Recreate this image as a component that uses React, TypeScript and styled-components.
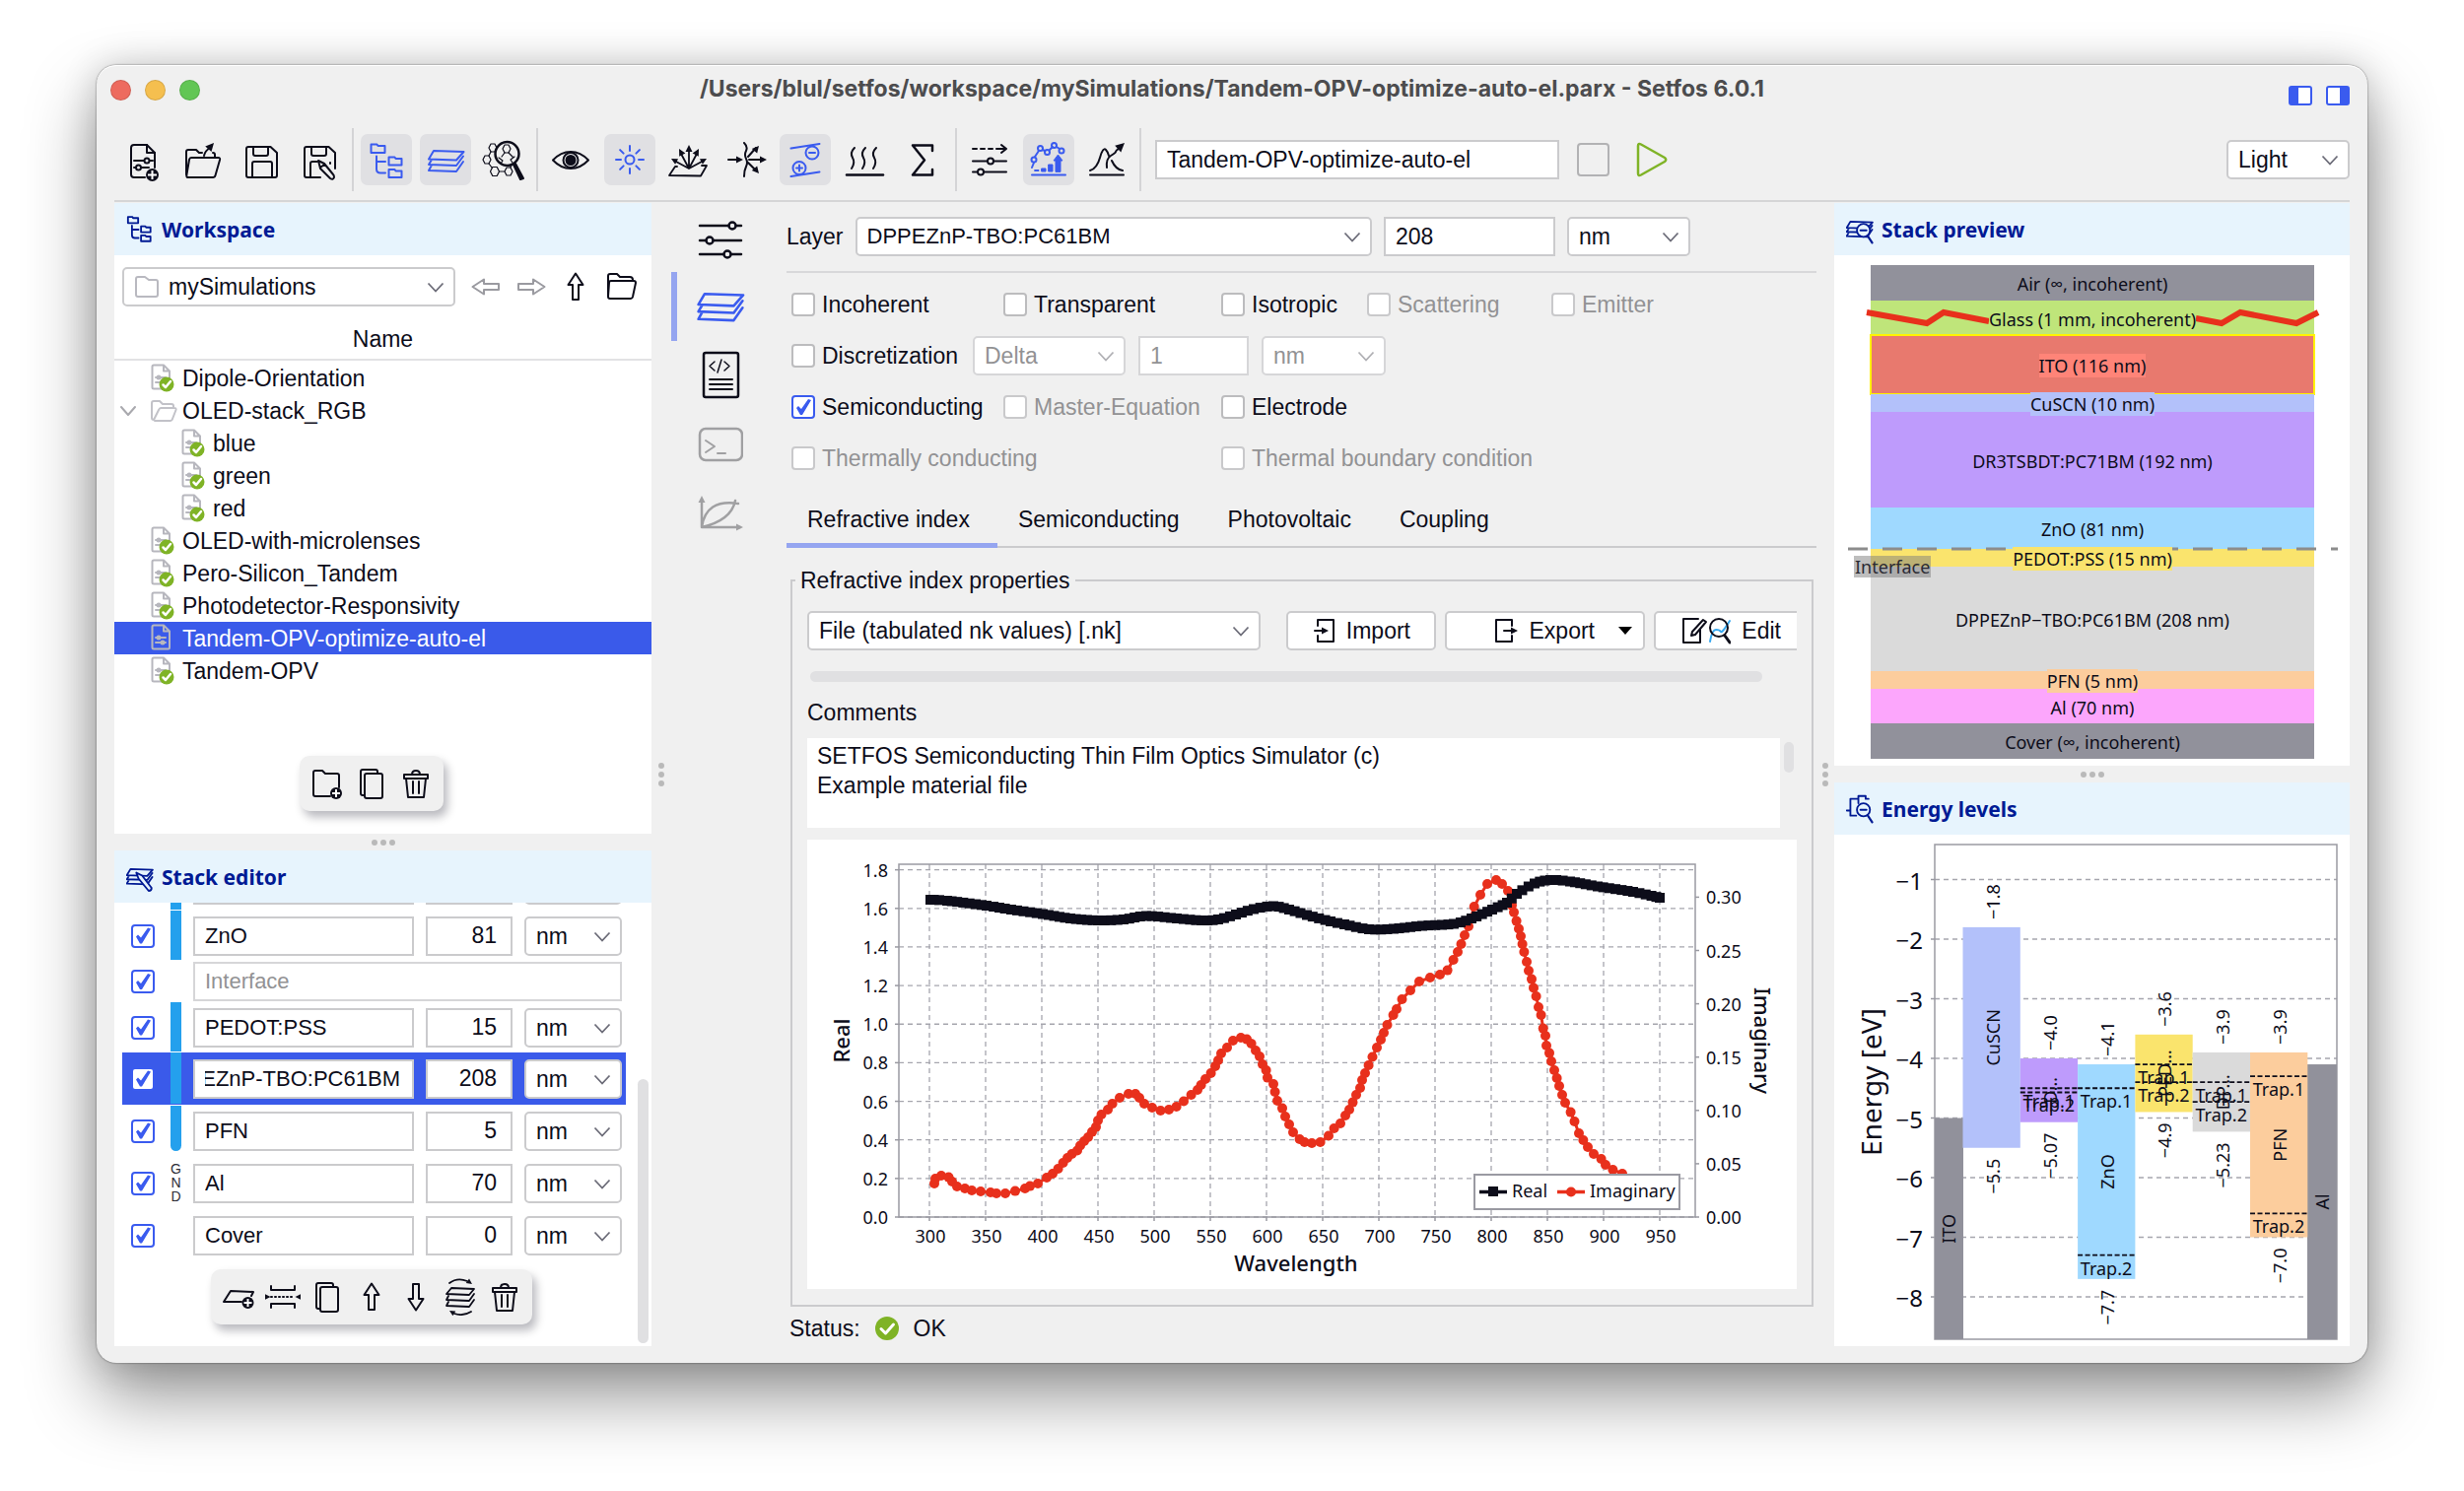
import React, { useEffect, useId, useRef } from "react";
import styled, { createGlobalStyle, css } from "styled-components";

const ink = "#0d0d1a";
const blue = "#3a5bef";
const navy = "#001a94";
const muted = "#929294";
const line = "#cbcbcd";
const lucida = `"Noto Sans", "Open Sans", sans-serif`;

const GlobalStyle = createGlobalStyle`
  *, *::before, *::after { box-sizing: border-box; }
  body { margin: 0; background: #fff; color: ${ink}; font: 23px/28px "Liberation Sans", Arial, sans-serif; }
  input, select, button, textarea { font: inherit; color: inherit; }
`;

/* ---------- window chrome ---------- */

const Desktop = styled.div`
  display: flex;
  min-height: 100vh;
  padding: 66px 98px 130px;
`;
const Window = styled.div`
  display: flex;
  flex: 1;
  flex-direction: column;
  min-width: 0;
  padding: 0 18px 17px;
  border-radius: 20px;
  background: #f0f0f0;
  box-shadow: 0 0 2px rgba(0, 0, 0, 0.6), inset 0 1px 0 #fff, 0 34px 70px rgba(0, 0, 0, 0.42), 0 0 36px rgba(0, 0, 0, 0.16);
`;
const TitleBar = styled.header`
  display: grid;
  grid-template-columns: 1fr auto 1fr;
  align-items: center;
  height: 50px;
`;
const Lights = styled.div`
  display: flex;
  gap: 14px;
  margin-left: -4px;
`;
const Light = styled.button<{ $c: string }>`
  width: 21px;
  height: 21px;
  padding: 0;
  border: 1px solid rgba(0, 0, 0, 0.12);
  border-radius: 50%;
  background: ${(p) => p.$c};
`;
const Title = styled.h1`
  margin: 0 0 2px;
  color: #4c4c4e;
  font: 700 23px/28px Inter, "Liberation Sans", sans-serif;
`;
const PaneToggles = styled.div`
  display: flex;
  justify-content: flex-end;
  gap: 14px;
  padding-top: 12px;
`;
const PlainButton = styled.button`
  display: flex;
  align-items: center;
  justify-content: center;
  padding: 0;
  border: 0;
  background: none;
`;

/* ---------- toolbar ---------- */

const Toolbar = styled.div`
  display: flex;
  align-items: center;
  height: 89px;
  padding: 14px 0 9px;
  border-bottom: 2px solid #d5d5d6;
  margin-bottom: 1px;
`;
const ToolGroup = styled.div<{ $w: number; $left: number }>`
  display: flex;
  flex: none;
  justify-content: space-between;
  width: ${(p) => p.$w}px;
  padding: 0 7px 0 ${(p) => p.$left}px;
`;
const Tool = styled.button<{ $on?: boolean }>`
  width: 52px;
  height: 52px;
  padding: 0;
  border: 0;
  border-radius: 7px;
  background: ${(p) => (p.$on ? "#e0e0e3" : "none")};
  color: ${(p) => (p.$on ? blue : ink)};
`;
const Divider = styled.div`
  width: 2px;
  height: 64px;
  background: #d4d4d6;
`;
const Spacer = styled.div`
  flex: 1;
`;
const RunButtons = styled.div`
  display: flex;
  align-items: center;
  gap: 26px;
  margin-left: 18px;
`;

/* ---------- form controls ---------- */

const TextField = styled.input<{ $w?: number; $small?: boolean }>`
  flex: none;
  width: ${(p) => (p.$w ? `${p.$w}px` : "100%")};
  min-width: 0;
  height: 40px;
  padding: 0 12px 0 10px;
  border: 2px solid ${line};
  background: #fff;
  font-size: ${(p) => (p.$small ? 22 : 23)}px;
  &:disabled { color: ${muted}; border-color: #d6d6d8; }
`;
const RunName = styled(TextField)`
  margin-left: 14px;
`;
const SelectWrap = styled.div<{ $w?: number }>`
  position: relative;
  ${(p) => (p.$w ? css`flex: none; width: ${p.$w}px;` : css`flex: 1; min-width: 0;`)}
`;
const NativeSelect = styled.select<{ $pad: number; $small?: boolean }>`
  display: block;
  width: 100%;
  height: 40px;
  padding: 0 36px 0 ${(p) => p.$pad}px;
  border: 2px solid ${line};
  border-radius: 5px;
  background: #fff;
  font-size: ${(p) => (p.$small ? 22 : 23)}px;
  appearance: none;
  &:disabled { color: ${muted}; opacity: 1; border-color: #d6d6d8; }
`;
const ChevronSvg = styled.svg`
  position: absolute;
  top: 15px;
  right: 11px;
  pointer-events: none;
`;
const SelectIcon = styled.span`
  position: absolute;
  top: 8px;
  left: 12px;
  display: flex;
  pointer-events: none;
`;
const Box = styled.input.attrs({ type: "checkbox" })`
  display: block;
  flex: none;
  width: 24px;
  height: 24px;
  margin: 0;
  border: 2px solid #bcbcbe;
  border-radius: 4px;
  background: #fff;
  appearance: none;
  &:disabled { border-color: #c9c9cb; }
  &:checked { border-color: ${blue}; }
  &:checked::after {
    content: "";
    display: block;
    width: 20px;
    height: 20px;
    background: ${blue};
    clip-path: polygon(3px 11px, 5px 9px, 8px 12px, 15px 2px, 18px 3px, 9px 18px, 7px 18px);
  }
`;
const CheckLabel = styled.label<{ $off?: boolean }>`
  display: flex;
  align-items: center;
  gap: 7px;
  white-space: nowrap;
  color: ${(p) => (p.$off ? muted : ink)};
`;

function Select(props: { label: string; value: string; w?: number; pad?: number; small?: boolean; disabled?: boolean; icon?: React.ReactNode; id?: string }) {
  const { label, value, w, pad = 10, small, disabled, icon, id } = props;
  return (
    <SelectWrap $w={w}>
      <NativeSelect id={id} aria-label={label} $pad={pad} $small={small} disabled={disabled} defaultValue={value}>
        <option>{value}</option>
      </NativeSelect>
      {icon && <SelectIcon>{icon}</SelectIcon>}
      <ChevronSvg width="18" height="12" fill="none" stroke={disabled ? "#b0b0b4" : "#6c6c78"} strokeWidth="1.800">
        <path d="M1.500 1.500L9 9.500L16.500 1.500" />
      </ChevronSvg>
    </SelectWrap>
  );
}
function Check({ label, on, off }: { label: string; on?: boolean; off?: boolean }) {
  const id = useId();
  return (
    <CheckLabel htmlFor={id} $off={off}>
      <Box id={id} defaultChecked={on} disabled={off} />
      {label}
    </CheckLabel>
  );
}

/* ---------- icons ---------- */

type IconProps = { w?: number; h?: number; box?: string; sw?: number; color?: string; children?: React.ReactNode };
const Icon = ({ w = 52, h = 52, box, sw = 2, color = "currentColor", children }: IconProps) => (
  <svg width={w} height={h} viewBox={box ?? `0 0 ${w} ${h}`} fill="none" stroke={color} strokeWidth={sw} strokeLinejoin="round" strokeLinecap="round" aria-hidden="true">
    {children}
  </svg>
);
const head = (x: number, y: number, deg: number, s = 1) => (
  <path d="M0 0L-7 3.500L-7 -3.500Z" transform={`translate(${x} ${y}) rotate(${deg}) scale(${s})`} fill="currentColor" stroke="none" />
);
const Plus = ({ x, y, r = 6 }: { x: number; y: number; r?: number }) => (
  <g>
    <circle cx={x} cy={y} r={r} fill={ink} stroke="none" />
    <path d={`M${x - r + 2} ${y}h${2 * r - 4}M${x} ${y - r + 2}v${2 * r - 4}`} stroke="#fff" strokeWidth="2" strokeLinecap="butt" />
  </g>
);
const NewFile = () => (
  <Icon>
    <path d="M26 44H15a3 3 0 0 1-3-3V14a3 3 0 0 1 3-3h13l8 8v15" />
    <path d="M28 11v8h8M15 27h10M31 27h3M15 34h2M22 34h8" />
    <circle cx="28" cy="27" r="2.5" /><circle cx="19.500" cy="34" r="2.500" />
    <Plus x={33.5} y={41.5} r={6.5} />
  </Icon>
);
const OpenFile = () => (
  <Icon>
    <path d="M9 41V18q0-2 2-2h8l3 3h3M36 19q2 0 2 2v3" />
    <path d="M14 24h27.500q2 0 1.600 2L38.500 42q-.5 2-2.500 2H11q-2 0-1.700-2L12 26q.5-2 2-2z" />
    <path d="M27 22q1-5 7-9" />{head(37, 9, -48, 1.2)}
  </Icon>
);
const diskPath = "M36 44H13q-2 0-2-2V15q0-2 2-2h22.500L42 19v23q0 2-2 2h-4M18 13v7q0 2 2 2h11q2 0 2-2v-7";
const Save = () => (
  <Icon><path d={diskPath} /><path d="M17 44V30q0-2 2-2h16q2 0 2 2v14M17 44h20" /></Icon>
);
const SaveAs = () => (
  <Icon>
    <path d="M27 44H13q-2 0-2-2V15q0-2 2-2h22.500L42 19v16M18 13v7q0 2 2 2h11q2 0 2-2v-7M17 44V30q0-2 2-2h5M37 30v-1" />
    <path d="M25 27l2 8 10 10q3 2 4-1 0-2-1-3L31 30zM27 34l4-3" />
  </Icon>
);
const treePath = "M10.500 19v-8.500h6l1 1.500h7v7zM16 22.500v13q0 4 4 4h5M16 28h9M28.500 31.500v-8h6l1 1.500h6v6.500zM28.500 44v-8h6l1 1.500h6v6.500z";
const TreeIcon = () => <Icon><path d={treePath} /></Icon>;
const layersPath = "M14 17l30.500 1-7.500 8.500-28-1zM12 26l-3 5 28 1 7-9.500M12 31.500l-3 5.500 28 1 7-10";
const LayersIcon = () => <Icon><path d={layersPath} /></Icon>;
const hexPath = (x: number, y: number, r: number) =>
  `M${x - r} ${y}L${x - r / 2} ${y - r}H${x + r / 2}L${x + r} ${y}L${x + r / 2} ${y + r}H${x - r / 2}Z`;
const Molecules = () => (
  <Icon>
    <g strokeWidth="1.200">
      <path d={hexPath(15, 14, 4) + hexPath(9, 26, 4) + hexPath(17, 38, 4.5) + hexPath(31, 38, 4)} />
      <path d="M13 18l-2 4M11 30l3 4M21.500 38h5M33 34l1-3" />
      <path d={hexPath(29, 15, 4)} />
      <path d="M27 19l-3 4M31 19l4 4M21 24l4 3-2 3M37 23l-4 3 2 3" />
    </g>
    <circle cx="29.500" cy="20" r="12" strokeWidth="2.500" />
    <path d="M36 31l2-1 8 15-3 1z" fill="currentColor" />
  </Icon>
);
const Eye = () => (
  <Icon>
    <path d="M8 26.500q8-8.500 18-8.500t18 8.500q-8 8.500-18 8.500t-18-8.500z" />
    <circle cx="26" cy="26.500" r="7.500" /><circle cx="26" cy="26.500" r="4.500" fill="currentColor" />
  </Icon>
);
const Sun = () => (
  <Icon>
    <circle cx="26" cy="26" r="4.500" />
    {[0, 45, 90, 135, 180, 225, 270, 315].map((d) => <path key={d} d="M26 17V12" transform={`rotate(${d} 26 26)`} />)}
  </Icon>
);
const Spray = () => (
  <Icon sw={1.8}>
    <path d="M15 33h-2L7 42l32 .5 6-10.500h-5M27 35V16M27 35L19 20M27 35L35 20M27 35L14 28M27 35L40 28" />
    {head(27, 11, -90)}{head(17, 15, -118)}{head(37, 15, -62)}{head(9, 25, -152, 0.9)}{head(45, 25, -28, 0.9)}
  </Icon>
);
const Scatter = () => (
  <Icon>
    <path d="M23 9q4 4 2 8t0 8 0 8 -2 10M7 26h10M28 26h12M27 23l8-9M27 29l8 8" />
    {head(22, 26, 0)}{head(46, 26, 0)}{head(38, 12, -50)}{head(38, 40, 50)}
  </Icon>
);
const Energy = () => (
  <Icon>
    <path d="M11.500 14.500l29-4.500M11.500 43l29-4.500" />
    <circle cx="33" cy="19" r="6.500" /><path d="M30 19h6" />
    <circle cx="20" cy="34.500" r="6.500" /><path d="M17 34.500h6M20 31.500v6" />
  </Icon>
);
const Heat = () => (
  <Icon>
    {[16, 27, 38].map((x) => <path key={x} d={`M${x} 14q-5 5-2 10t-1 11`} />)}
    <path d="M8 41.500h37" strokeWidth="2.500" />
  </Icon>
);
const Sigma = () => <Icon sw={2.5}><path d="M36 17v-5.500H16L28 26.500 16 41.500h20V36" /></Icon>;
const Sweep = () => (
  <Icon>
    <path d="M9 15h4M17 15h4M25 15h4M33 15h9M38 11l5 4-5 4M9 27.500h15M30 27.500h13M9 38.500h5M20 38.500h23" />
    <circle cx="27" cy="27.500" r="3" /><circle cx="17" cy="38.500" r="3" />
  </Icon>
);
const Optimize = () => (
  <Icon>
    <path d="M12 23l4-6M20 16l2 1M27 16l3-3M34 13l3 2M9 34l2-5" />
    {[[11, 26], [17.500, 14.500], [24.500, 18.500], [31.500, 11.500], [39, 17]].map(([x, y]) => <circle key={x} cx={x} cy={y} r="2.500" />)}
    <path d="M12 36.500h4v1h-4zM19 35h4v3h-4zM26 31h4v7h-4zM33 38V27h-2l4.500-6 4.500 6h-2v11z" fill="currentColor" strokeWidth="1" />
    <path d="M9 41.500h34" />
  </Icon>
);
const CurveFit = () => (
  <Icon>
    <path d="M9 37q7-2 10-13t6-8q2 2 3 6M31 27q4 9 11 10M26 34q-1-9 4-12t5-4 5-5" />
    {head(44, 9, -42, 1.3)}<path d="M9 41.500h34" />
  </Icon>
);
const HeaderIcon = ({ d, mag, pen }: { d: string; mag?: boolean; pen?: boolean }) => (
  <Icon w={28} h={30} box="8 8 38 40" sw={2.5}>
    <path d={d} />
    {mag && <g><circle cx="32" cy="29" r="9" fill="#e7f4fd" /><path d="M28 29h8M38 37l6 9" strokeWidth="3" /></g>}
    {pen && <path d="M22 22l3 8 14 17q4 0 4-4L30 26z" fill="#e7f4fd" />}
  </Icon>
);
const energyPath = "M9 30h5V14h11V10h10v4h4M14 30v7h8M25 14v6";

const FolderOutline = ({ color = "#b9b9c0", w = 26 }: { color?: string; w?: number }) => (
  <Icon w={w} h={24} box="0 0 26 24" color={color}><path d="M2 4q0-2 2-2h7l4 3h7q2 0 2 2v13q0 2-2 2H4q-2 0-2-2z" /></Icon>
);
const FolderOpen = ({ color = "#c2c2c8" }: { color?: string }) => (
  <Icon w={27} h={24} color={color}>
    <path d="M3 21q-2 0-2-2V4q0-2 2-2h6l3 3h9q2 0 2 2v2M3 21L8 11q1-2 2-2h14q2 0 1.500 2L22 20q-.5 2-2 2H4" />
  </Icon>
);
const FolderFront = () => (
  <Icon w={32} h={30}>
    <path d="M2 24V4q0-2 2-2h7l3 3h10q3 0 3 3" />
    <path d="M5 9h23q2 0 2 2l-3 14q-.5 2-2 2H4q-2 0-2-2l1-14q0-2 2-2z" />
  </Icon>
);
const Arrow = ({ deg, color = ink }: { deg: number; color?: string }) => (
  <Icon w={30} h={30} color={color}>
    <path d="M15 1.500L22.500 13H18v15h-6V13H7.500z" transform={`rotate(${deg} 15 15)`} />
  </Icon>
);
const Trash = () => (
  <Icon w={32} h={32}><path d="M4 7h24v4H4zM6 11l2 19h16l2-19M12 7q0-4 4-4t4 4M13 14v12M19 14v12" /></Icon>
);
const CopyIcon = () => (
  <Icon w={32} h={32}><path d="M9 8q0-2 2-2h14q2 0 2 2v21q0 2-2 2H11q-2 0-2-2zM9 28H7q-2 0-2-2V4q0-2 2-2h13q2 0 2 2v2" /></Icon>
);
const AddFolder = () => (
  <Icon w={32} h={32}><path d="M19 29H4q-2 0-2-2V5q0-2 2-2h7l3 3h12q2 0 2 2v12" /><Plus x={25} y={26} /></Icon>
);
const AddLayer = () => (
  <Icon w={34} h={32}><path d="M20 21H2l7-11 23 1-2 4" /><Plus x={26.5} y={22} /></Icon>
);
const Thickness = () => (
  <Icon w={36} h={32}>
    <path d="M6 5v4h24V5M6 27v-4h24v4" /><path d="M6 16h24" strokeDasharray="1 3" />
    {head(5.500, 16, 0, 0.8)}{head(30.500, 16, 180, 0.8)}
  </Icon>
);
const Reverse = () => (
  <Icon w={34} h={38} sw={1.8}>
    <path d="M8 10l23 1-5 6-23-1zM5 18l-2 4 23 1 5-7M5 24l-2 4 23 1 5-7" />
    <path d="M6 5q8-6 18-2M28 34q-8 5-17 2" />{head(29, 6, 35, 0.8)}{head(6, 33, 210, 0.8)}
  </Icon>
);
const FileIcon = ({ ok }: { ok?: boolean }) => (
  <Icon w={24} h={29} color="#b7b7be">
    <path d="M1.500 3q0-1.500 1.500-1.500h10l6 6V24q0 1.500-1.500 1.500H3q-1.500 0-1.500-1.500zM13 1.500v6h6M5 14h10M5 19h10" />
    <circle cx="8" cy="14" r="1.500" /><circle cx="12" cy="19" r="1.500" />
    {ok && <g><circle cx="16" cy="21" r="7.500" fill="#7fb326" stroke="none" /><path d="M12.500 21.500l2.500 2.500 5-6" stroke="#fff" strokeWidth="2.500" /></g>}
  </Icon>
);
const OkIcon = () => (
  <Icon w={26} h={26}><circle cx="13" cy="13" r="12" fill="#7fb326" stroke="none" /><path d="M7 13.500l4.500 4.500 8-9" stroke="#fff" strokeWidth="3" /></Icon>
);

/* ---------- panels ---------- */

const Columns = styled.div`
  display: grid;
  flex: 1;
  grid-template-columns: 545px 20px minmax(0, 1fr) 18px 523px;
`;
const Column = styled.div`
  display: flex;
  flex-direction: column;
  min-width: 0;
`;
const Panel = styled.section<{ $grow?: boolean }>`
  display: flex;
  flex: ${(p) => (p.$grow ? "1" : "none")};
  flex-direction: column;
  background: #fff;
`;
const PanelHead = styled.header`
  display: flex;
  align-items: center;
  gap: 8px;
  height: 53px;
  padding-left: 12px;
  background: #e7f4fd;
  color: ${navy};
`;
const PanelTitle = styled.h2`
  margin: 0;
  font: 700 21px/28px ${lucida};
`;
const Grip = styled.div<{ $vertical?: boolean }>`
  display: flex;
  flex-direction: ${(p) => (p.$vertical ? "column" : "row")};
  align-items: center;
  justify-content: center;
  gap: 3px;
  ${(p) => !p.$vertical && "height: 17px;"}
`;
const GripDot = styled.i`
  width: 6px;
  height: 6px;
  border-radius: 50%;
  background: #b9b9b9;
`;
const GripDots = ({ vertical }: { vertical?: boolean }) => (
  <Grip $vertical={vertical}><GripDot /><GripDot /><GripDot /></Grip>
);
const FloatBar = styled.div<{ $gap: number; $bottom: number }>`
  display: flex;
  align-items: center;
  align-self: center;
  gap: ${(p) => p.$gap}px;
  height: 56px;
  padding: 0 12px;
  margin: 8px 24px ${(p) => p.$bottom}px 0;
  border-radius: 10px;
  background: #f0f0f0;
  box-shadow: 4px 6px 10px rgba(0, 0, 20, 0.28);
`;
const FloatButton = styled(PlainButton)`
  width: 32px;
  height: 40px;
  color: ${ink};
  svg { flex: none; }
`;

/* workspace */
const PathRow = styled.div`
  display: flex;
  align-items: center;
  height: 64px;
  padding: 0 14px 0 8px;
`;
const PathButtons = styled.div`
  display: flex;
  flex: 1;
  justify-content: space-between;
  padding-left: 16px;
`;
const TreeHead = styled.div`
  height: 43px;
  border-bottom: 2px solid #e2e2e4;
  line-height: 42px;
  text-align: center;
`;
const Tree = styled.ul`
  flex: 1;
  padding: 1px 0 0;
  margin: 0;
  list-style: none;
`;
const TreeItem = styled.li<{ $depth: number; $selected?: boolean }>`
  display: flex;
  align-items: center;
  height: 33px;
  padding-left: ${(p) => 5 + p.$depth * 31}px;
  background: ${(p) => (p.$selected ? "#3a5aea" : "none")};
  color: ${(p) => (p.$selected ? "#fff" : ink)};
`;
const Twisty = styled.span`
  display: flex;
  width: 32px;
`;
const ItemIcon = styled.span`
  display: flex;
  width: 32px;
`;

const files: { name: string; depth: number; kind: "ok" | "open" | "current" }[] = [
  { name: "Dipole-Orientation", depth: 0, kind: "ok" },
  { name: "OLED-stack_RGB", depth: 0, kind: "open" },
  { name: "blue", depth: 1, kind: "ok" },
  { name: "green", depth: 1, kind: "ok" },
  { name: "red", depth: 1, kind: "ok" },
  { name: "OLED-with-microlenses", depth: 0, kind: "ok" },
  { name: "Pero-Silicon_Tandem", depth: 0, kind: "ok" },
  { name: "Photodetector-Responsivity", depth: 0, kind: "ok" },
  { name: "Tandem-OPV-optimize-auto-el", depth: 0, kind: "current" },
  { name: "Tandem-OPV", depth: 0, kind: "ok" },
];

function Workspace() {
  return (
    <Panel $grow>
      <PanelHead><HeaderIcon d={treePath} /><PanelTitle>Workspace</PanelTitle></PanelHead>
      <PathRow>
        <Select label="Folder" value="mySimulations" w={338} pad={45} icon={<FolderOutline />} />
        <PathButtons>
          <PlainButton aria-label="Back"><Arrow deg={-90} color="#9a9aa0" /></PlainButton>
          <PlainButton aria-label="Forward"><Arrow deg={90} color="#9a9aa0" /></PlainButton>
          <PlainButton aria-label="Up"><Arrow deg={0} /></PlainButton>
          <PlainButton aria-label="Browse"><FolderFront /></PlainButton>
        </PathButtons>
      </PathRow>
      <TreeHead>Name</TreeHead>
      <Tree>
        {files.map((f) => (
          <TreeItem key={f.name} $depth={f.depth} $selected={f.kind === "current"}>
            <Twisty>
              {f.kind === "open" && <Icon w={18} h={12} color="#a9a9ae"><path d="M2 2l7 8 7-8" /></Icon>}
            </Twisty>
            <ItemIcon>{f.kind === "open" ? <FolderOpen /> : <FileIcon ok={f.kind === "ok"} />}</ItemIcon>
            {f.name}
          </TreeItem>
        ))}
      </Tree>
      <FloatBar $gap={13} $bottom={23}>
        <FloatButton aria-label="New folder"><AddFolder /></FloatButton>
        <FloatButton aria-label="Duplicate"><CopyIcon /></FloatButton>
        <FloatButton aria-label="Delete"><Trash /></FloatButton>
      </FloatBar>
    </Panel>
  );
}

/* stack editor */
const EditorBody = styled.div`
  position: relative;
  display: flex;
  flex-direction: column;
`;
const ScrollEdge = styled.div`
  display: flex;
  align-items: flex-end;
  height: 8px;
  overflow: hidden;
`;
const LayerRow = styled.div<{ $h: number; $selected?: boolean }>`
  display: flex;
  flex: none;
  align-items: center;
  width: 511px;
  height: ${(p) => p.$h}px;
  padding-left: 9px;
  margin-left: 8px;
  background: ${(p) => (p.$selected ? "#3a5aea" : "none")};
`;
const Contact = styled.div<{ $kind: "bar" | "end" | "none" }>`
  align-self: ${(p) => (p.$kind === "none" ? "center" : "stretch")};
  width: 11px;
  margin: ${(p) => (p.$kind === "end" ? "1px 12px 6px 16px" : "0 12px 1px 16px")};
  border-radius: ${(p) => (p.$kind === "end" ? "0 0 6px 6px" : "0")};
  background: ${(p) => (p.$kind === "none" ? "none" : "#24a0ed")};
  color: #2c2c36;
  font: 14px/14px "Liberation Sans", sans-serif;
  text-align: center;
  word-break: break-all;
`;
const RowFields = styled.div`
  display: flex;
  gap: 12px;
  width: 435px;
`;
const NumberField = styled(TextField)`
  padding-right: 14px;
  text-align: right;
`;
const VScroll = styled.div`
  position: absolute;
  right: 3px;
  bottom: 3px;
  width: 11px;
  height: 268px;
  border-radius: 6px;
  background: #e0e0e2;
`;

type Layer = { name: string; value?: string; h: number; kind: "bar" | "end" | "none"; ground?: boolean; selected?: boolean };
const layers: Layer[] = [
  { name: "ZnO", value: "81", h: 51, kind: "bar" },
  { name: "Interface", h: 42, kind: "none" },
  { name: "PEDOT:PSS", value: "15", h: 51, kind: "bar" },
  { name: "DPPEZnP-TBO:PC61BM", value: "208", h: 53, kind: "bar", selected: true },
  { name: "PFN", value: "5", h: 53, kind: "end" },
  { name: "Al", value: "70", h: 53, kind: "none", ground: true },
  { name: "Cover", value: "0", h: 53, kind: "none" },
];

function NameField({ value, w, disabled, toEnd }: { value: string; w: number; disabled?: boolean; toEnd?: boolean }) {
  const ref = useRef<HTMLInputElement>(null);
  useEffect(() => {
    if (toEnd && ref.current) ref.current.scrollLeft = ref.current.scrollWidth;
  }, [toEnd]);
  return <TextField ref={ref} $w={w} $small aria-label="Layer name" defaultValue={value} disabled={disabled} />;
}
function StackRow({ layer }: { layer: Layer }) {
  return (
    <LayerRow $h={layer.h} $selected={layer.selected}>
      <Box aria-label={`Enable ${layer.name}`} defaultChecked />
      <Contact $kind={layer.kind}>{layer.ground ? "GND" : null}</Contact>
      <RowFields>
        {layer.value === undefined ? (
          <NameField value={layer.name} w={435} disabled />
        ) : (
          <>
            <NameField value={layer.name} w={224} toEnd={layer.selected} />
            <NumberField $w={88} aria-label="Thickness" defaultValue={layer.value} />
            <Select label="Unit" value="nm" w={99} />
          </>
        )}
      </RowFields>
    </LayerRow>
  );
}
function StackEditor() {
  return (
    <Panel>
      <PanelHead><HeaderIcon d={layersPath} pen /><PanelTitle>Stack editor</PanelTitle></PanelHead>
      <EditorBody>
        <ScrollEdge><StackRow layer={{ name: "DR3TSBDT:PC71BM", value: "192", h: 53, kind: "bar" }} /></ScrollEdge>
        {layers.map((l) => <StackRow key={l.name} layer={l} />)}
        <FloatBar $gap={13} $bottom={22}>
          <FloatButton aria-label="Add layer"><AddLayer /></FloatButton>
          <FloatButton aria-label="Fit thickness"><Thickness /></FloatButton>
          <FloatButton aria-label="Duplicate layer"><CopyIcon /></FloatButton>
          <FloatButton aria-label="Move up"><Arrow deg={0} /></FloatButton>
          <FloatButton aria-label="Move down"><Arrow deg={180} /></FloatButton>
          <FloatButton aria-label="Reverse stack"><Reverse /></FloatButton>
          <FloatButton aria-label="Delete layer"><Trash /></FloatButton>
        </FloatBar>
        <VScroll />
      </EditorBody>
    </Panel>
  );
}

/* ---------- centre ---------- */

const Centre = styled.main`
  display: flex;
  min-width: 0;
`;
const Rail = styled.nav`
  flex: none;
  width: 117px;
`;
const RailItem = styled.button<{ $tone: "on" | "off" | "plain" }>`
  display: flex;
  align-items: center;
  justify-content: center;
  width: 100px;
  height: 70px;
  padding: 0 6px 0 0;
  border: 0;
  border-left: 6px solid ${(p) => (p.$tone === "on" ? "#95a5f0" : "transparent")};
  background: none;
  color: ${(p) => (p.$tone === "on" ? blue : p.$tone === "off" ? "#a0a0a2" : ink)};
`;
const Content = styled.div`
  display: flex;
  flex: 1;
  flex-direction: column;
  min-width: 0;
`;
const LayerLine = styled.div`
  display: flex;
  align-items: center;
  gap: 12px;
  padding: 14px 128px 15px 0;
  border-bottom: 2px solid #d8d8da;
`;
const Options = styled.div`
  display: grid;
  grid-template-columns: 215px 221px 148px 187px 1fr;
  grid-auto-rows: 52px;
  align-items: center;
  padding-left: 5px;
  margin-top: 6px;
`;
const WideRow = styled.div`
  display: flex;
  grid-column: 1 / -1;
  align-items: center;
  gap: 13px;
`;
const FirstCell = styled.div`
  flex: none;
  width: 171px;
`;
const OptionCell = styled.div<{ $span?: number }>`
  grid-column: span ${(p) => p.$span ?? 1};
`;
const Tabs = styled.div`
  display: flex;
  height: 56px;
  margin-top: 9px;
  border-bottom: 2px solid #cbcbcd;
`;
const Tab = styled.button<{ $on?: boolean }>`
  height: 56px;
  padding: 3px 28px 0 21px;
  border: 0;
  border-bottom: 5px solid ${(p) => (p.$on ? "#95a5f0" : "transparent")};
  background: none;
`;
const Fieldset = styled.fieldset`
  min-width: 0;
  padding: 18px 15px 16px;
  margin: 20px 3px 0 4px;
  border: 2px solid #cbcbcd;
`;
const Legend = styled.legend`
  padding: 0 5px;
  margin-left: -12px;
  line-height: 26px;
`;
const FileRow = styled.div`
  display: flex;
  gap: 9px;
  overflow: hidden;
`;
const PushButton = styled.button<{ $w: number; $first?: boolean; $cut?: boolean }>`
  display: flex;
  flex: none;
  align-items: center;
  justify-content: flex-end;
  gap: 11px;
  width: ${(p) => p.$w}px;
  height: 40px;
  padding: 0 24px 0 0;
  margin-left: ${(p) => (p.$first ? 17 : 0)}px;
  margin-right: ${(p) => (p.$cut ? -10 : 0)}px;
  border: 2px solid ${line};
  border-radius: 5px;
  background: #fff;
`;
const Triangle = styled.i`
  margin: 0 -13px 0 13px;
  border: 7px solid transparent;
  border-top: 8px solid #000;
  border-bottom: 0;
`;
const HScroll = styled.div`
  height: 11px;
  margin: 21px 35px 16px 3px;
  border-radius: 6px;
  background: #e0e0e2;
`;
const CommentsLabel = styled.label`
  display: block;
  height: 41px;
  line-height: 30px;
`;
const CommentsRow = styled.div`
  display: flex;
  gap: 4px;
  margin-bottom: 12px;
`;
const Comments = styled.textarea`
  flex: 1;
  height: 91px;
  padding: 3px 10px;
  border: 0;
  background: #fff;
  line-height: 30px;
  resize: none;
  overflow: hidden;
`;
const CommentsScroll = styled.div`
  width: 10px;
  height: 31px;
  margin: 4px 3px 0 0;
  border-radius: 6px;
  background: #e0e0e2;
`;
const ChartSvg = styled.svg`
  display: block;
  width: 100%;
  height: auto;
  background: #fff;
  font-family: ${lucida};
`;
const StatusLine = styled.div`
  display: flex;
  align-items: center;
  flex: 1;
  gap: 14px;
  min-height: 40px;
  padding: 4px 0 0 3px;
`;

const realPts: number[][] = [[125, 61], [142, 62], [182, 67], [207, 71], [239, 75.5], [267, 80], [295, 82], [321, 81], [344, 77.5], [375, 80], [400, 82], [417, 81], [435, 76], [453, 70.5], [473, 67.5], [489, 71], [507, 76.5], [531, 83], [545, 86], [570, 91], [595, 90.5], [624, 87.5], [656, 85.5], [674, 80], [695, 71], [710, 64], [720, 55], [738, 44.5], [754, 41], [774, 42.5], [802, 47.5], [838, 53], [865, 59]];
const imagPts: number[][] = [[129, 349], [130, 344], [136, 341], [143.5, 342.6], [147, 347], [152, 352], [160, 354], [167, 356], [176, 357], [186, 358], [192, 359], [201, 359], [211, 356.6], [221, 354], [226, 351.6], [234, 349], [243, 343], [249, 339], [254.6, 334], [259.6, 328], [264, 323], [268.5, 319], [274, 315.5], [277, 310.5], [281, 306], [285, 302], [289, 296.6], [293, 291.6], [295, 285], [298.5, 279], [305, 274], [309.6, 268], [317, 262], [326, 258], [333, 258], [337, 262], [342, 268], [350, 272], [358.5, 275], [367, 274], [374.6, 271], [382, 265.5], [389.6, 259], [396, 254], [399.6, 249], [404, 243], [409.6, 237], [414, 230], [417, 224], [420, 217], [426, 211], [432, 204], [440, 201], [446, 202.6], [450.6, 207], [455, 214], [459, 220], [462, 228], [465.6, 234], [467, 241.6], [473, 248], [474.6, 256], [477, 265], [482, 272.6], [485, 281], [489, 289], [493, 297], [499.6, 304], [504.6, 307], [512, 308], [520.6, 307], [529, 300.5], [534.6, 293], [541, 288], [546, 280], [550, 274], [553.5, 266.6], [557, 259], [561, 252], [563, 244], [566, 237], [569.6, 229], [573.5, 220.5], [578, 211], [582, 203], [585, 196], [588.5, 188], [594.6, 178], [598, 172], [603.5, 162], [612, 153], [621, 144], [632, 140], [642, 137], [649.6, 132.6], [655.6, 122], [660, 114], [663.5, 106], [667, 97], [671, 88], [676.7, 68], [683, 56], [690, 45], [699, 41], [705, 45], [711, 52], [715, 66.6], [717, 73.7], [719.6, 82.6], [722, 90.5], [724, 98], [725.6, 106], [727.4, 114], [730, 124], [732, 133], [735, 141.6], [737, 150.5], [739.6, 159], [742, 170], [744.6, 178], [746.7, 191.6], [749, 199], [750, 209], [753, 216.6], [755, 225], [758, 234], [760.6, 242], [763, 250], [766, 259], [769, 267], [774.6, 276.6], [778.5, 286], [783, 298], [787.4, 305], [792, 312], [798, 319], [805.6, 324], [810, 330], [817.4, 335], [827, 339]];

/* Catmull-Rom samples between the support points of a series */
function smooth(pts: number[][], step: number) {
  const out: number[][] = [];
  for (let i = 0; i < pts.length - 1; i++) {
    const a = pts[Math.max(0, i - 1)], b = pts[i], c = pts[i + 1], d = pts[Math.min(pts.length - 1, i + 2)];
    const n = Math.max(1, Math.round((c[0] - b[0]) / step));
    for (let k = 0; k < n; k++) {
      const t = k / n;
      out.push([0, 1].map((j) => 0.5 * (2 * b[j] + (c[j] - a[j]) * t + (2 * a[j] - 5 * b[j] + 4 * c[j] - d[j]) * t * t + (3 * b[j] - a[j] - 3 * c[j] + d[j]) * t ** 3)));
    }
  }
  out.push(pts[pts.length - 1]);
  return out;
}

function IndexChart() {
  const L = 93, R = 901, T = 25, B = 383;
  const xs = Array.from({ length: 14 }, (_, i) => ({ v: 300 + i * 50, x: 124 + i * 57 }));
  const ys = Array.from({ length: 10 }, (_, i) => ({ v: (i * 0.2).toFixed(1), y: B - i * 39.15 }));
  const rs = Array.from({ length: 7 }, (_, i) => ({ v: (i * 0.05).toFixed(2), y: B - i * 54.1 }));
  return (
    <ChartSvg viewBox="0 0 1004 456" role="img" aria-label="Refractive index over wavelength" fontSize="18" fill={ink}>
      <g stroke="#a6a6ae" strokeWidth="1.300" strokeDasharray="5 4">
        {xs.map((t) => <path key={t.v} d={`M${t.x} ${T}V${B}`} />)}
        {ys.map((t) => <path key={t.v} d={`M${L} ${t.y}H${R}`} />)}
      </g>
      <g stroke="#9a9aa2" strokeWidth="1.500" fill="none">
        <rect x={L} y={T} width={R - L} height={B - T} />
        {xs.map((t) => <path key={t.v} d={`M${t.x} ${B}v4`} />)}
        {ys.map((t) => <path key={t.v} d={`M${L} ${t.y}h-4`} />)}
        {rs.map((t) => <path key={t.v} d={`M${R} ${t.y}h4`} />)}
      </g>
      {xs.map((t) => <text key={t.v} x={t.x + 1} y={409} textAnchor="middle">{t.v}</text>)}
      {ys.map((t) => <text key={t.v} x={82} y={t.y + 7} textAnchor="end">{t.v}</text>)}
      {rs.map((t) => <text key={t.v} x={912} y={t.y + 7}>{t.v}</text>)}
      <g fontSize="22" fontWeight="500" textAnchor="middle">
        <text x="496" y="438">Wavelength</text>
        <text transform="translate(43 204) rotate(-90)">Real</text>
        <text transform="translate(961 204) rotate(90)">Imaginary</text>
      </g>
      <g fill="#e8301c">
        <polyline points={imagPts.join(" ")} fill="none" stroke="#e8301c" strokeWidth="3" />
        {imagPts.map(([x, y], i) => <circle key={i} cx={x} cy={y} r="5" />)}
      </g>
      {smooth(realPts, 6).map(([x, y], i) => <rect key={i} x={x - 5} y={y - 5} width="10" height="10" />)}
      <rect x="677" y="340" width="208" height="35" fill="#fff" stroke="#9a9aa2" strokeWidth="2" />
      <path d="M682 357.500h28" stroke={ink} strokeWidth="3.500" /><rect x="691" y="352" width="10" height="10" />
      <text x="715" y="363">Real</text>
      <path d="M761 357.500h28" stroke="#e8301c" strokeWidth="3.500" /><circle cx="775" cy="357.500" r="5" fill="#e8301c" />
      <text x="794" y="363">Imaginary</text>
    </ChartSvg>
  );
}

function Editor() {
  const layerId = useId();
  const commentsId = useId();
  return (
    <Centre>
      <Rail>
        <RailItem $tone="plain" aria-label="Settings">
          <Icon w={46} h={46} sw={2.5}>
            <path d="M2 11h29M39 11h5M2 26h6M16 26h28M2 40h24M34 40h10" />
            <circle cx="35" cy="11" r="3.500" /><circle cx="12" cy="26" r="3.500" /><circle cx="30" cy="40" r="3.500" />
          </Icon>
        </RailItem>
        <RailItem $tone="on" aria-label="Layers">
          <Icon w={50} h={38} box="7 13 39 28" sw={2}><path d={layersPath} /></Icon>
        </RailItem>
        <RailItem $tone="plain" aria-label="Script">
          <Icon w={46} h={50} sw={2.5}>
            <rect x="6" y="2" width="35" height="45" rx="2" />
            <path d="M17 11l-5 4.500 5 4.500M27 11l5 4.500-5 4.500M24 9l-4 13" strokeWidth="1.500" />
            <path d="M12 29h23M12 34h23M12 39h23" strokeWidth="2" />
          </Icon>
        </RailItem>
        <RailItem $tone="off" aria-label="Terminal">
          <Icon w={46} h={36} sw={2.5}><rect x="2" y="2" width="43" height="32" rx="6" /><path d="M8 14l9 6-9 6M20 27h8" strokeWidth="2" /></Icon>
        </RailItem>
        <RailItem $tone="off" aria-label="Results">
          <Icon w={48} h={38} sw={2.5}>
            <path d="M5 33V5M5 33h39M5 33Q9 4 42 9M5 33Q35 26 39 6" />
            {head(5, 1, -90)}{head(47, 33, 0)}
          </Icon>
        </RailItem>
      </Rail>
      <Content>
        <LayerLine>
          <label htmlFor={layerId}>Layer</label>
          <Select id={layerId} label="Layer" value="DPPEZnP-TBO:PC61BM" small />
          <TextField $w={174} aria-label="Thickness" defaultValue="208" />
          <Select label="Unit" value="nm" w={125} />
        </LayerLine>
        <Options>
          <Check label="Incoherent" />
          <Check label="Transparent" />
          <Check label="Isotropic" />
          <Check label="Scattering" off />
          <Check label="Emitter" off />
          <WideRow>
            <FirstCell><Check label="Discretization" /></FirstCell>
            <Select label="Discretization type" value="Delta" w={155} disabled />
            <TextField $w={112} aria-label="Step" defaultValue="1" disabled />
            <Select label="Step unit" value="nm" w={126} disabled />
          </WideRow>
          <Check label="Semiconducting" on />
          <Check label="Master-Equation" off />
          <OptionCell $span={3}><Check label="Electrode" /></OptionCell>
          <OptionCell $span={2}><Check label="Thermally conducting" off /></OptionCell>
          <OptionCell $span={3}><Check label="Thermal boundary condition" off /></OptionCell>
        </Options>
        <Tabs role="tablist">
          <Tab role="tab" $on>Refractive index</Tab>
          <Tab role="tab">Semiconducting</Tab>
          <Tab role="tab">Photovoltaic</Tab>
          <Tab role="tab">Coupling</Tab>
        </Tabs>
        <Fieldset>
          <Legend>Refractive index properties</Legend>
          <FileRow>
            <Select label="Source" value="File (tabulated nk values) [.nk]" />
            <PushButton $w={152} $first>
              <Icon w={22} h={26}><path d="M4 8V2h16v22H4v-6M1 13h9" />{head(15, 13, 0)}</Icon>Import
            </PushButton>
            <PushButton $w={203}>
              <Icon w={24} h={26}><path d="M17 8V2H1v22h16v-6M9 13h9" />{head(23, 13, 0)}</Icon>Export<Triangle />
            </PushButton>
            <PushButton $w={155} $cut>
              <Icon w={50} h={30}>
                <path d="M17 3H2v24h17V14M10 20l1-4L22 4l3 2L14 19z" />
                <path d="M29 26q2-12 6-12t5 2 9-11" stroke="#3aa9f0" />
                <circle cx="38" cy="12" r="9" /><path d="M44 20l5 7" strokeWidth="3" />
              </Icon>Edit
            </PushButton>
          </FileRow>
          <HScroll />
          <CommentsLabel htmlFor={commentsId}>Comments</CommentsLabel>
          <CommentsRow>
            <Comments id={commentsId} defaultValue={"SETFOS Semiconducting Thin Film Optics Simulator (c)\nExample material file"} />
            <CommentsScroll />
          </CommentsRow>
          <IndexChart />
        </Fieldset>
        <StatusLine><span>Status:</span><OkIcon /><span>OK</span></StatusLine>
      </Content>
    </Centre>
  );
}

/* ---------- right ---------- */

const PreviewBody = styled.div`
  padding: 10px 36px 7px 37px;
  font: 18px/24px ${lucida};
`;
const Slab = styled.div<{ $h: number; $c: string; $outlined?: boolean }>`
  position: relative;
  display: flex;
  align-items: center;
  justify-content: center;
  height: ${(p) => p.$h}px;
  background: ${(p) => p.$c};
  ${(p) => p.$outlined && "outline: 2px solid #fff200; outline-offset: -1px;"}
`;
const SlabText = styled.span<{ $c: string }>`
  position: relative;
  z-index: 1;
  margin-top: 2px;
  background: ${(p) => p.$c};
`;
const Crack = styled.svg`
  position: absolute;
  inset: 0;
  width: 100%;
  height: 100%;
  overflow: visible;
`;
const InterfaceTag = styled.span`
  position: absolute;
  top: 7px;
  left: -17px;
  z-index: 1;
  padding: 0 1px;
  background: rgba(125, 125, 125, 0.5);
  color: #2a2a33;
  line-height: 22px;
`;

const slabs = [
  { t: "Air (∞, incoherent)", h: 36, c: "#91919b" },
  { t: "Glass (1 mm, incoherent)", h: 35, c: "#bfe57a" },
  { t: "ITO (116 nm)", h: 60, c: "#e8796e", tag: "#ff8478" },
  { t: "CuSCN (10 nm)", h: 18, c: "#b3c1fa" },
  { t: "DR3TSBDT:PC71BM (192 nm)", h: 97, c: "#be9bfc" },
  { t: "ZnO (81 nm)", h: 42, c: "#9fd9ff" },
  { t: "PEDOT:PSS (15 nm)", h: 18, c: "#fae46d" },
  { t: "DPPEZnP−TBO:PC61BM (208 nm)", h: 106, c: "#dadada" },
  { t: "PFN (5 nm)", h: 18, c: "#fccd9d" },
  { t: "Al (70 nm)", h: 35, c: "#fca6fc" },
  { t: "Cover (∞, incoherent)", h: 36, c: "#91919b" },
];

function StackPreview() {
  return (
    <Panel>
      <PanelHead><HeaderIcon d={layersPath} mag /><PanelTitle>Stack preview</PanelTitle></PanelHead>
      <PreviewBody>
        {slabs.map((s, i) => (
          <Slab key={s.t} $h={s.h} $c={s.c} $outlined={i === 2}>
            {i === 1 && (
              <Crack viewBox="0 0 450 35" fill="none" stroke="#e8301c" strokeWidth="6">
                <path d="M-4 12L57 23L74 12L120 21M330 18L356 23L375 12L432 23L454 12" />
              </Crack>
            )}
            {i === 6 && (
              <Crack viewBox="0 0 450 18" fill="none" stroke="#8c8c8c" strokeWidth="3">
                <path d="M-23 0H474" strokeDasharray="20 15" />
              </Crack>
            )}
            {i === 6 && <InterfaceTag>Interface</InterfaceTag>}
            <SlabText $c={s.tag ?? s.c}>{s.t}</SlabText>
          </Slab>
        ))}
      </PreviewBody>
    </Panel>
  );
}

type Level = { n: string; top: number; bottom: number; c: string; a?: string; b?: string; traps?: number[] };
const levels: Level[] = [
  { n: "CuSCN", top: -1.8, bottom: -5.5, c: "#b3c1fa", a: "−1.8", b: "−5.5" },
  { n: "D…", top: -4, bottom: -5.07, c: "#be9bfc", a: "−4.0", b: "−5.07", traps: [-4.5, -4.57] },
  { n: "ZnO", top: -4.1, bottom: -7.7, c: "#9fd9ff", a: "−4.1", b: "−7.7", traps: [-4.5, -7.3] },
  { n: "PED…", top: -3.6, bottom: -4.9, c: "#fae46d", a: "−3.6", b: "−4.9", traps: [-4.1, -4.4] },
  { n: "DP…", top: -3.9, bottom: -5.23, c: "#dadada", a: "−3.9", b: "−5.23", traps: [-4.4, -4.73] },
  { n: "PFN", top: -3.9, bottom: -7, c: "#fccd9d", a: "−3.9", b: "−7.0", traps: [-4.3, -6.6] },
];
const ey = (e: number) => 45.5 - (e + 1) * 60.5;

function EnergyLevels() {
  const L = 102, R = 510, T = 10, B = 512;
  return (
    <Panel $grow>
      <PanelHead><HeaderIcon d={energyPath} mag /><PanelTitle>Energy levels</PanelTitle></PanelHead>
      <ChartSvg viewBox="0 0 523 519" role="img" aria-label="Energy levels of the stack" fontSize="18" fill={ink}>
        {[1, 2, 3, 4, 5, 6, 7, 8].map((v) => (
          <g key={v}>
            <path d={`M${L} ${ey(-v)}H${R}`} stroke="#a6a6ae" strokeWidth="1.300" strokeDasharray="5 4" />
            <path d={`M${L} ${ey(-v)}h-4`} stroke="#9a9aa2" strokeWidth="1.500" />
            <text x="90" y={ey(-v) + 10} fontSize="24" textAnchor="end">−{v}</text>
          </g>
        ))}
        <text transform="translate(48 251) rotate(-90)" fontSize="28" textAnchor="middle">Energy [eV]</text>
        <rect x={L} y={T} width={R - L} height={B - T} fill="none" stroke="#9a9aa2" strokeWidth="1.500" />
        <rect x={L} y={ey(-5)} width="29" height={B - ey(-5)} fill="#91919b" />
        <rect x="480" y={ey(-4.1)} width="30" height={B - ey(-4.1)} fill="#91919b" />
        <text transform={`translate(123 ${(B + ey(-5)) / 2}) rotate(-90)`} textAnchor="middle">ITO</text>
        <text transform={`translate(502 ${(B + ey(-4.1)) / 2}) rotate(-90)`} textAnchor="middle">Al</text>
        {levels.map((l, i) => {
          const x = 130.5 + i * 58.3;
          const mid = x + 37;
          return (
            <g key={l.n}>
              <rect x={x} y={ey(l.top)} width="58.3" height={ey(l.bottom) - ey(l.top)} fill={l.c} />
              <text transform={`translate(${mid} ${ey(l.top) - 8}) rotate(-90)`}>{l.a}</text>
              <text transform={`translate(${mid} ${ey(l.bottom) + 11}) rotate(-90)`} textAnchor="end">{l.b}</text>
              <text transform={`translate(${mid} ${(ey(l.top) + ey(l.bottom)) / 2}) rotate(-90)`} textAnchor="middle">{l.n}</text>
              {l.traps?.map((e, k) => (
                <g key={k}>
                  <path d={`M${x} ${ey(e)}h58`} stroke={ink} strokeWidth="1.800" strokeDasharray="5 2.500" />
                  <text x={x + 29} y={ey(e) + 20} textAnchor="middle">{`Trap.${k + 1}`}</text>
                </g>
              ))}
            </g>
          );
        })}
      </ChartSvg>
    </Panel>
  );
}

/* ---------- app ---------- */

export default function App() {
  return (
    <>
      <GlobalStyle />
      <Desktop>
        <Window>
          <TitleBar>
            <Lights>
              <Light $c="#ed6b5f" aria-label="Close" />
              <Light $c="#f5bf4f" aria-label="Minimize" />
              <Light $c="#62c655" aria-label="Zoom" />
            </Lights>
            <Title>/Users/blul/setfos/workspace/mySimulations/Tandem-OPV-optimize-auto-el.parx - Setfos 6.0.1</Title>
            <PaneToggles>
              <PlainButton aria-label="Left pane">
                <Icon w={24} h={20} color={blue}><rect x="1" y="1" width="22" height="18" rx="2" fill="#fff" /><path d="M2 2h7v16H2z" fill={blue} /></Icon>
              </PlainButton>
              <PlainButton aria-label="Right pane">
                <Icon w={24} h={20} color={blue}><rect x="1" y="1" width="22" height="18" rx="2" fill="#fff" /><path d="M15 2h7v16h-7z" fill={blue} /></Icon>
              </PlainButton>
            </PaneToggles>
          </TitleBar>
          <Toolbar>
            <ToolGroup $w={241} $left={5}>
              <Tool aria-label="New"><NewFile /></Tool>
              <Tool aria-label="Open"><OpenFile /></Tool>
              <Tool aria-label="Save"><Save /></Tool>
              <Tool aria-label="Save as"><SaveAs /></Tool>
            </ToolGroup>
            <Divider />
            <ToolGroup $w={185} $left={7}>
              <Tool $on aria-label="Workspace"><TreeIcon /></Tool>
              <Tool $on aria-label="Stack"><LayersIcon /></Tool>
              <Tool aria-label="Materials"><Molecules /></Tool>
            </ToolGroup>
            <Divider />
            <ToolGroup $w={423} $left={7}>
              <Tool aria-label="View"><Eye /></Tool>
              <Tool $on aria-label="Emission"><Sun /></Tool>
              <Tool aria-label="Outcoupling"><Spray /></Tool>
              <Tool aria-label="Scattering"><Scatter /></Tool>
              <Tool $on aria-label="Drift diffusion"><Energy /></Tool>
              <Tool aria-label="Thermal"><Heat /></Tool>
              <Tool aria-label="Sum"><Sigma /></Tool>
            </ToolGroup>
            <Divider />
            <ToolGroup $w={185} $left={7}>
              <Tool aria-label="Sweep"><Sweep /></Tool>
              <Tool $on aria-label="Optimize"><Optimize /></Tool>
              <Tool aria-label="Fit"><CurveFit /></Tool>
            </ToolGroup>
            <Divider />
            <RunName $w={410} aria-label="Simulation name" defaultValue="Tandem-OPV-optimize-auto-el" />
            <RunButtons>
              <PlainButton aria-label="Stop"><Icon w={33} h={34} color="#b2b2b4"><rect x="1" y="1" width="31" height="32" rx="3" /></Icon></PlainButton>
              <PlainButton aria-label="Run"><Icon w={33} h={36} color="#7fb326" sw={2.5}><path d="M3 4q0-3 3-1.500L30 16q2.500 2 0 4L6 33.500Q3 35 3 32z" /></Icon></PlainButton>
            </RunButtons>
            <Spacer />
            <Select label="Theme" value="Light" w={125} />
          </Toolbar>
          <Columns>
            <Column>
              <Workspace />
              <GripDots />
              <StackEditor />
            </Column>
            <GripDots vertical />
            <Editor />
            <GripDots vertical />
            <Column>
              <StackPreview />
              <GripDots />
              <EnergyLevels />
            </Column>
          </Columns>
        </Window>
      </Desktop>
    </>
  );
}
